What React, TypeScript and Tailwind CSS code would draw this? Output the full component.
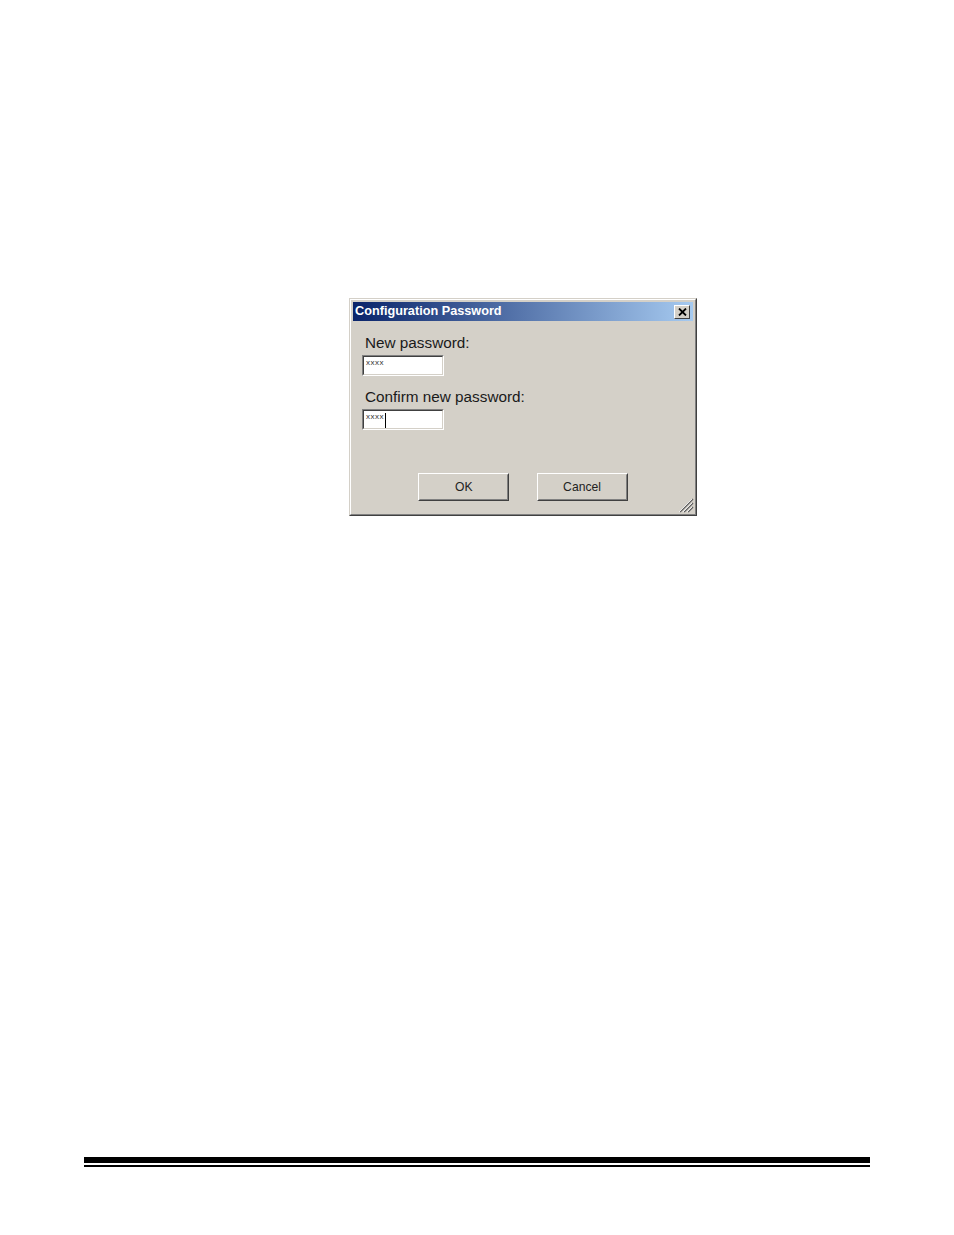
import React from "react";

function Field({ cursor }: { cursor?: boolean }) {
  return (
    <div className="ml-[9px] w-[82px] h-[21px] border border-t-[#808080] border-l-[#808080] border-r-white border-b-white">
      <div className="w-full h-full border border-t-[#404040] border-l-[#404040] border-r-[#d4d0c8] border-b-[#d4d0c8] bg-white flex items-start pl-[2px] pt-[1px]">
        <span className="text-[8px] leading-[9px] text-[#333] tracking-[0.5px]" style={{ fontFamily: '"Liberation Sans", Arial, sans-serif' }}>
          xxxx
        </span>
        {cursor && <span className="ml-[1px] mt-[1px] w-[1px] h-[15px] bg-black" />}
      </div>
    </div>
  );
}

function Btn({ label }: { label: string }) {
  return (
    <div className="w-[91px] h-[28px] border border-t-white border-l-white border-r-[#404040] border-b-[#404040]">
      <div className="w-full h-full border border-t-[#d4d0c8] border-l-[#d4d0c8] border-r-[#808080] border-b-[#808080] flex items-center justify-center">
        <span className="text-[13.5px] leading-none text-[#222] scale-x-90" style={{ fontFamily: '"Liberation Sans", Arial, sans-serif' }}>
          {label}
        </span>
      </div>
    </div>
  );
}

export default function App() {
  return (
    <div className="w-[954px] h-[1235px] bg-white flex flex-col" style={{ fontFamily: '"Liberation Sans", Arial, sans-serif' }}>
      <div className="pt-[298px] pl-[349px]">
        <div className="w-[348px] h-[218px] shrink-0 border border-t-[#d4d0c8] border-l-[#d4d0c8] border-r-[#404040] border-b-[#404040]">
          <div className="relative w-full h-full border border-t-white border-l-white border-r-[#808080] border-b-[#808080] bg-[#d4d0c8] p-[2px] flex flex-col">
            <div className="h-[19px] shrink-0 flex items-center justify-between pl-[2px] pr-[3px] bg-[linear-gradient(to_right,#0a246a,#a6caf0)]">
              <span className="text-white font-bold text-[12.7px] leading-none">Configuration Password</span>
              <div className="w-[16px] h-[14px] border border-t-white border-l-white border-r-[#404040] border-b-[#404040] bg-[#d4d0c8] flex items-center justify-center">
                <svg width="9" height="8" viewBox="0 0 9 8">
                  <path d="M1 0.5 L8 7.5 M8 0.5 L1 7.5" stroke="#000" strokeWidth="1.8" />
                </svg>
              </div>
            </div>
            <div className="flex flex-col">
              <div className="mt-[13px] ml-[12px] text-[15.3px] leading-[17px] text-[#1a1a1a]">New password:</div>
              <div className="mt-[4px]"><Field /></div>
              <div className="mt-[12px] ml-[12px] text-[15.3px] leading-[17px] text-[#1a1a1a]">Confirm new password:</div>
              <div className="mt-[4px]"><Field cursor /></div>
              <div className="mt-[43px] flex justify-center gap-[28px]">
                <Btn label="OK" />
                <Btn label="Cancel" />
              </div>
            </div>
            <svg className="absolute right-[1px] bottom-[1px]" width="15" height="15" viewBox="0 0 15 15">
              <path d="M14 1 L1 14 M14 5 L5 14 M14 9 L9 14" stroke="#606060" strokeWidth="1.5" />
              <path d="M13 1 L0 14 M13 5 L4 14 M13 9 L8 14" stroke="#ffffff" strokeWidth="0.8" />
            </svg>
          </div>
        </div>
      </div>
      <div className="mt-[641px] ml-[84px] w-[786px] flex flex-col">
        <div className="h-[6px] bg-black" />
        <div className="h-[2px] mt-[2px] bg-black" />
      </div>
    </div>
  );
}
